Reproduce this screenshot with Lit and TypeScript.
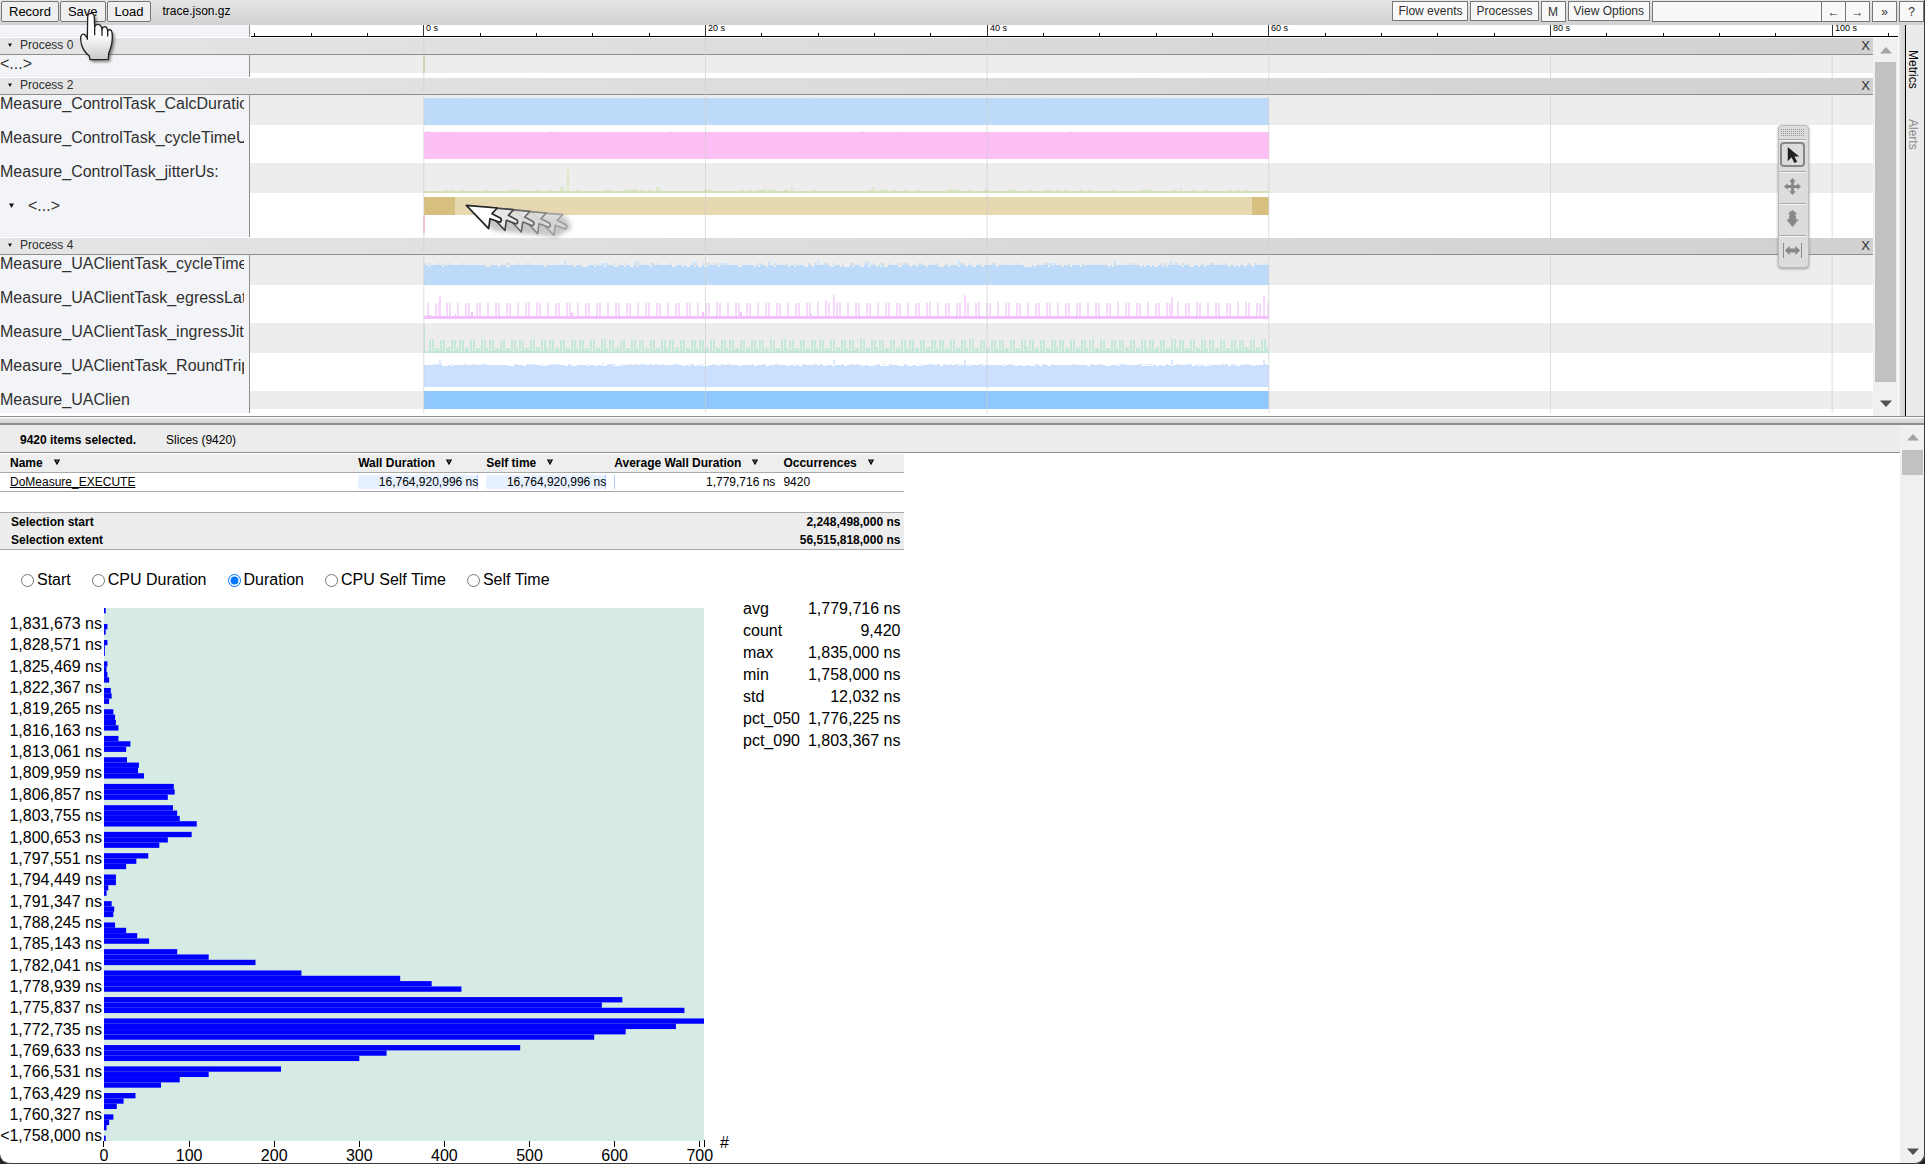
import { LitElement, html, svg, css, SVGTemplateResult } from "lit";
import { customElement, property, state } from "lit/decorators.js";
import { classMap } from "lit/directives/class-map.js";

/* ---------- shared timeline scale ---------- */
const LABEL_WIDTH = 250;
const ORIGIN = 424 - LABEL_WIDTH;
const PX_PER_TICK = 56.33;
const DATA_WIDTH = 845;

type Lane = {
  name: string;
  height: number;
  band: number;
  shaded: boolean;
  expandable?: boolean;
  draw: () => SVGTemplateResult;
};
type Process = { name: string; lanes: Lane[] };

const noise = (n: number) => {
  const v = Math.sin(n * 127.1 + 11.7) * 43758.5453;
  return v - Math.floor(v);
};

const block = (x: number, y: number, w: number, h: number, fill: string) =>
  svg`<rect x=${x} y=${y} width=${w} height=${h} fill=${fill}></rect>`;

const bars = (list: [number, number, number][], base: number, fill: string) =>
  svg`<path fill=${fill} d=${list
    .map(([x, w, top]) => `M${x} ${top}h${w}V${base}h${-w}z`)
    .join("")}></path>`;

/* Solid area whose top edge wobbles between a few levels. */
const ragged = (base: number, levels: number[], fill: string, step = 2) => {
  const list: [number, number, number][] = [];
  for (let x = 0; x < DATA_WIDTH; x += step) {
    const level = levels[Math.floor(noise(x + base) * levels.length)];
    list.push([ORIGIN + x, Math.min(step, DATA_WIDTH - x), level]);
  }
  return bars(list, base, fill);
};

const peaks = (list: [number, number][], base: number, fill: string) =>
  bars(list.map(([x, top]) => [ORIGIN + x, 2, top]), base, fill);

/* Spikes repeating every 30 pixels. */
const pulses = (start: number, offsets: number[], top: number) => {
  const list: [number, number, number][] = [];
  for (let x = start; x < DATA_WIDTH; x += 30) {
    offsets.forEach((o) => {
      const px = x + o;
      if (px > 2 && px < DATA_WIDTH - 1) list.push([ORIGIN + px, 2, noise(px) > 0.85 ? top - 1 : top]);
    });
  }
  return list;
};

const PROCESSES: Process[] = [
  {
    name: "Process 0",
    lanes: [
      {
        name: "<...>", height: 22, band: 18, shaded: true,
        draw: () => block(ORIGIN - 1, 0, 2, 18, "#c4dca4"),
      },
    ],
  },
  {
    name: "Process 2",
    lanes: [
      {
        name: "Measure_ControlTask_CalcDuratio", height: 34, band: 30, shaded: true,
        draw: () => svg`
          ${block(ORIGIN, 3, DATA_WIDTH, 27, "#bddbf8")}
          ${bars([[214, 2, 2], [391, 2, 2], [560, 2, 2], [790, 2, 2], [905, 2, 2]], 3, "#d3e5f5")}`,
      },
      {
        name: "Measure_ControlTask_cycleTimeUs", height: 34, band: 30, shaded: false,
        draw: () => svg`
          ${block(ORIGIN, 3, DATA_WIDTH, 27, "#fdc0f5")}
          ${bars([[176, 5, 2], [197, 2, 2], [300, 3, 2], [420, 2, 2], [611, 3, 2], [650, 2, 2], [820, 2, 2]], 3, "#fde0f8")}`,
      },
      {
        name: "Measure_ControlTask_jitterUs:", height: 34, band: 30, shaded: true,
        draw: () => svg`
          ${ragged(30, [28, 28, 28, 28, 28, 27, 28, 27], "#d3e2ba", 4)}
          ${bars([[200, 2, 26], [310, 4, 24], [317, 2, 7], [386, 2, 26], [406, 3, 24], [409, 2, 26], [514, 2, 25], [541, 2, 24], [622, 2, 24], [700, 2, 26], [830, 2, 26], [930, 2, 25]], 28, "#dde8cb")}`,
      },
      {
        name: "<...>", height: 40, band: 36, shaded: false, expandable: true,
        draw: () => svg`
          ${block(ORIGIN, 0, 31, 18, "#d7c07f")}
          ${block(ORIGIN + 31, 0, 797, 18, "#e6d8b1")}
          ${block(ORIGIN + 828, 0, 17, 18, "#d7c07f")}
          ${block(ORIGIN - 1, 18, 2, 18, "#fbb8d4")}`,
      },
    ],
  },
  {
    name: "Process 4",
    lanes: [
      {
        name: "Measure_UAClientTask_cycleTimeUs", height: 34, band: 30, shaded: true,
        draw: () => svg`
          ${ragged(10, [10, 10, 10, 8], "#cfe3f6", 2)}
          ${peaks([[140, 6], [213, 6], [271, 6], [344, 6], [393, 6], [442, 6], [534, 6], [690, 6], [746, 6]], 10, "#cfe3f6")}
          ${ragged(30, [10, 10, 10, 12], "#bddbf8", 2)}`,
      },
      {
        name: "Measure_UAClientTask_egressLate", height: 34, band: 30, shaded: false,
        draw: () => svg`
          ${bars([...pulses(-27, [0, 8, 11, 19, 22], 14), [189, 2, 7], [575, 2, 11], [583, 2, 6], [714, 2, 6], [921, 2, 8], [1013, 2, 7]], 27, "#f6d9fc")}
          ${bars([[178, 3, 26], [205, 1, 25], [221, 2, 23], [321, 2, 24], [452, 2, 23], [490, 2, 23], [561, 1, 25]], 27, "#f2c0fb")}
          ${block(ORIGIN, 27, DATA_WIDTH, 3, "#f2c0fb")}`,
      },
      {
        name: "Measure_UAClientTask_ingressJitt", height: 34, band: 30, shaded: true,
        draw: () => svg`
          ${block(ORIGIN, 2, 1, 28, "#bfe6d3")}
          ${bars(pulses(-3, [0, 3, 8, 11, 19, 22], 17), 30, "#c6e8d9")}
          ${bars(pulses(-3, [5, 14, 16, 25, 27], 25), 30, "#c6e8d9")}
          ${ragged(30, [28, 28, 29, 28], "#bfe6d3", 2)}`,
      },
      {
        name: "Measure_UAClientTask_RoundTrip", height: 34, band: 30, shaded: false,
        draw: () => svg`
          ${ragged(8, [7, 8, 8], "#dbe9ff", 3)}
          ${peaks([[15, 3], [178, 6], [409, 3], [540, 3], [747, 3], [839, 3]], 8, "#dbe9ff")}
          ${ragged(30, [8, 8, 8, 9], "#cbdfff", 3)}`,
      },
      {
        name: "Measure_UAClien", height: 22, band: 18, shaded: true,
        draw: () => block(ORIGIN, 0, DATA_WIDTH, 18, "#8ec8ff"),
      },
    ],
  },
];

/* ---------- one collapsible process group ---------- */
@customElement("process-group")
class ProcessGroup extends LitElement {
  @property({ attribute: false }) process!: Process;
  @state() private open = true;

  static styles = css`
    :host { display: block; padding-top: 1px; }
    .head {
      display: flex; align-items: flex-start; justify-content: space-between;
      box-sizing: border-box; height: 17px; border-bottom: 1px solid #8e8e8e;
      background: linear-gradient(to right, #e5e5e5, #d1d1d1);
    }
    button { border: 0; background: none; padding: 0; font: inherit; color: #303030; cursor: pointer; }
    .toggle { display: flex; align-items: center; gap: 8px; padding-left: 8px; line-height: 14px; }
    .close { padding-right: 3px; font-size: 13px; line-height: 15px; }
    .lane { display: flex; }
    .name {
      flex: none; box-sizing: border-box; width: 250px; padding-right: 5px;
      border-right: 1px solid #8e8e8e; background: #f3f4f7; color: #303030;
      font-size: 16px; line-height: 18px;
    }
    .text { overflow: hidden; white-space: nowrap; }
    .expandable { display: flex; gap: 14px; padding-left: 9px; align-items: flex-start; }
    .expandable svg { margin-top: 6px; }
    .plot { flex: 1; min-width: 0; background: #fff; }
    .plot svg { display: block; width: 100%; }
    .shade { fill: #ededed; }
    .blank { fill: none; }
  `;

  private arrow(size: number) {
    return html`<svg width=${size} height=${size} viewBox="0 0 5 5" aria-hidden="true">
      <path d="M0 .5h5L2.5 5z" fill="#111"></path>
    </svg>`;
  }

  render() {
    return html`
      <div class="head">
        <button class="toggle" @click=${() => (this.open = !this.open)}>${this.arrow(4)}${this.process.name}</button>
        <button class="close">X</button>
      </div>
      ${this.open
        ? this.process.lanes.map(
            (lane) => html`<div class="lane">
              <div class=${classMap({ name: true, expandable: !!lane.expandable })}>
                ${lane.expandable ? this.arrow(5) : ""}
                <div class="text">${lane.name}</div>
              </div>
              <div class="plot">
                <svg height=${lane.height} shape-rendering="crispEdges">
                  <rect class=${lane.shaded ? "shade" : "blank"} width="100%" height=${lane.band}></rect>
                  ${lane.draw()}
                </svg>
              </div>
            </div>`
          )
        : ""}
    `;
  }
}

/* ---------- duration histogram ---------- */
const BINS: Record<number, number> = {
  0: 2, 3: 4, 4: 2, 6: 4, 7: 1, 8: 1, 10: 4, 11: 3, 12: 4, 13: 6, 15: 8, 16: 9, 17: 6,
  19: 11, 20: 13, 21: 14, 22: 17, 24: 17, 25: 31, 26: 26, 28: 27, 29: 41, 30: 40, 31: 47,
  33: 82, 34: 83, 35: 75, 37: 81, 38: 86, 39: 89, 40: 109, 42: 103, 43: 75, 44: 65,
  46: 52, 47: 38, 48: 26, 50: 14, 51: 14, 52: 5, 53: 3, 55: 9, 56: 12, 57: 11,
  59: 13, 60: 26, 61: 39, 62: 53, 64: 86, 65: 123, 66: 178, 68: 232, 69: 348, 70: 385, 71: 420,
  73: 609, 74: 585, 75: 682, 77: 705, 78: 672, 79: 613, 80: 576, 82: 489, 83: 332, 84: 300,
  86: 208, 87: 123, 88: 89, 89: 67, 91: 37, 92: 23, 93: 15, 95: 11, 96: 6, 97: 3, 99: 2,
};
const Y_LABELS = [
  "1,831,673", "1,828,571", "1,825,469", "1,822,367", "1,819,265", "1,816,163", "1,813,061",
  "1,809,959", "1,806,857", "1,803,755", "1,800,653", "1,797,551", "1,794,449", "1,791,347",
  "1,788,245", "1,785,143", "1,782,041", "1,778,939", "1,775,837", "1,772,735", "1,769,633",
  "1,766,531", "1,763,429", "1,760,327", "<1,758,000",
];

@customElement("duration-histogram")
class DurationHistogram extends LitElement {
  static styles = css`
    :host { display: block; }
    svg { display: block; font: 16px "Liberation Sans", Arial, sans-serif; }
    .plot { fill: #d5ebe3; }
    .bar { fill: #0000ff; }
    .axis { stroke: #000; stroke-width: 1; shape-rendering: crispEdges; }
    .end { text-anchor: end; }
    .mid { text-anchor: middle; }
  `;
  render() {
    const x = (v: number) => 104 + (v * 600) / 705;
    return html`<svg width="743" height="555" role="img" aria-label="Duration histogram">
      <rect class="plot" x="104" y="0" width="600" height="533"></rect>
      ${Object.entries(BINS).map(
        ([bin, count]) => svg`<rect class="bar" x="104" y=${Number(bin) * 5.33} width=${x(count) - 104} height="5.33"></rect>`
      )}
      ${Y_LABELS.map((label, i) => svg`<text class="end" x="102" y=${Math.round(21 + i * 21.35)}>${label} ns</text>`)}
      ${[0, 100, 200, 300, 400, 500, 600, 700].map(
        (v) => svg`
          <path class="axis" d="M${Math.floor(x(v)) - (v ? 0 : 1) + 0.5} 533v6"></path>
          <text class="mid" x=${x(v)} y="553">${v}</text>`
      )}
      <path class="axis" d="M704.5 532v7"></path>
      <text x="720" y="540">#</text>
    </svg>`;
  }
}

/* ---------- page ---------- */
const STATS = [
  ["avg", "1,779,716 ns"], ["count", "9,420"], ["max", "1,835,000 ns"], ["min", "1,758,000 ns"],
  ["std", "12,032 ns"], ["pct_050", "1,776,225 ns"], ["pct_090", "1,803,367 ns"],
];
const METRICS = ["Start", "CPU Duration", "Duration", "CPU Self Time", "Self Time"];
const COLUMNS = ["Name", "Wall Duration", "Self time", "Average Wall Duration", "Occurrences"];

const TOOLS: { label: string; icon: SVGTemplateResult }[] = [
  { label: "Select", icon: svg`<path fill="#222" d="M5 2v15l4-4 3 6 3-1.500-3-5.500h5z"></path>` },
  { label: "Pan", icon: svg`<path fill="#888" d="M10 1l3.500 4h-2v3.500H15v-2l4 3.500-4 3.500v-2h-3.500V15h2L10 19l-3.500-4h2v-3.500H5v2L1 10l4-3.500v2h3.500V5h-2z"></path>` },
  { label: "Zoom", icon: svg`<path fill="#888" d="M10 1l5 4h-2l1 6h2.500L10 19l-6.500-8H6l1-6H5z"></path>` },
  {
    label: "Timing",
    icon: svg`<path fill="#888" d="M0 2h1v16H0zM19 2h1v16h-1zM2 10l5-5v3h6V5l5 5-5 5v-3H7v3z"></path>`,
  },
];

@customElement("app-root")
class AppRoot extends LitElement {
  @state() private tool = 0;
  @state() private metric = 2;

  static styles = css`
    :host {
      display: flex; flex-direction: column; position: relative; overflow: hidden;
      box-sizing: border-box; height: 100vh; background: #fff; color: #000;
      font: 12px "Liberation Sans", Arial, sans-serif;
    }
    .toolbar {
      flex: none; display: flex; justify-content: space-between; align-items: flex-start;
      height: 25px; box-sizing: border-box; padding: 1px 1px 0;
      background: linear-gradient(#e5e5e5, #d1d1d1);
    }
    .group { display: flex; align-items: flex-start; }
    .files { gap: 1px; }
    .files button {
      height: 21px; padding: 0 7px; border: 1px solid #767676; border-radius: 2px;
      background: #efefef; font: 13px "Liberation Sans", Arial, sans-serif; color: #000;
    }
    .title { padding-left: 10px; line-height: 21px; }
    .options { gap: 2px; }
    .options button, .find {
      box-sizing: border-box; height: 20px; padding: 0 5px; border: 1px solid #777;
      background: #f8f8f8; font: inherit; color: #303030;
    }
    .options .square { width: 25px; height: 21px; padding: 0; }
    .options .find { width: 170px; height: 21px; outline: 0; }
    .joined { display: flex; }
    .joined .square { margin-left: -1px; }

    .timeline { flex: none; display: flex; border-bottom: 1px solid #8e8e8e; }
    .main { flex: 1; min-width: 0; }
    .ruler { display: flex; height: 12px; }
    .corner { flex: none; box-sizing: border-box; width: 250px; border-right: 1px solid #8e8e8e; background: #f3f4f7; }
    .ticks { flex: 1; min-width: 0; }
    .ticks svg { display: block; width: 100%; height: 12px; font-size: 9px; }
    .baseline, .tick { fill: #000; }
    .major { fill: #333; }
    .body { display: flex; }
    .tracks { position: relative; flex: 1; min-width: 0; padding-bottom: 3px; }
    .grid { position: absolute; inset: 0 0 3px 250px; width: calc(100% - 250px); height: calc(100% - 3px); pointer-events: none; }
    .grid line { stroke: #d0d0d0; stroke-opacity: 0.7; }
    .scroll { flex: none; display: flex; flex-direction: column; align-items: center; width: 25px; box-sizing: border-box; background: #f0f0f0; }
    .scroll svg { flex: none; }
    .thumb { background: #c1c1c1; width: 21px; }
    .upper { padding: 9px 0; margin-top: 1px; }
    .upper .thumb { flex: 1; margin: 8px 0 18px; }
    .handle { flex: none; width: 6px; margin-left: 1px; border-right: 1px solid #000; background: linear-gradient(to right, #e5e5e5, #d1d1d1); }
    .sidebar { flex: none; width: 19px; display: flex; flex-direction: column; gap: 30px; padding-top: 25px; box-sizing: border-box; background: #ebebeb; }
    .sidebar button {
      writing-mode: vertical-rl; align-self: flex-start; padding: 0; border: 0; background: none;
      font: inherit; line-height: 14px; color: #8c8c8c;
    }
    .sidebar .current { color: #000; }

    .splitter { flex: none; height: 5px; margin-top: 1px; background: linear-gradient(#e5e5e5, #d1d1d1); border-bottom: 2px solid #8e8e8e; }
    .analysis { flex: 1; min-height: 0; display: flex; overflow: hidden; }
    .content { flex: 1; min-width: 0; }
    .summary { display: flex; gap: 30px; height: 28px; padding-left: 20px; line-height: 31px; box-sizing: border-box; background: #ececec; border-bottom: 1px solid #8e8e8e; }
    .details { width: fit-content; padding-top: 1px; }
    table { border-collapse: collapse; border-spacing: 0; }
    th, td { padding: 0; text-align: left; font-weight: normal; }
    .slices, .selection { width: 100%; line-height: 14px; }
    .slices th, .slices td { padding: 2px 4px; border-bottom: 1px solid #aaa; height: 14px; white-space: nowrap; box-sizing: content-box; }
    .slices th { background: #eee; font-weight: bold; }
    .slices th:first-child, .slices td:first-child { padding-left: 10px; }
    .slices svg { margin-left: 11px; vertical-align: 2px; }
    .slices a { color: #000; text-decoration-skip-ink: none; }
    .name { width: 354px; }
    .total { width: 128px; }
    .average { width: 169px; }
    .count { width: 125px; }
    .meter { text-align: right; height: 14px; }
    .full { background: #e6f0ff; box-shadow: inset -1px 0 #a8ccff; }
    .thin { box-shadow: inset 1px 0 #a8ccff; }
    .selection { margin-top: 20px; line-height: 18px; background: #ededed; border: solid #aaa; border-width: 1px 0; }
    .selection th { padding-left: 11px; font-weight: bold; }
    .selection td { padding-right: 4px; text-align: right; font-weight: bold; }
    .metrics { display: flex; align-items: center; gap: 16px; height: 48px; box-sizing: border-box; padding: 12px 0 0 16px; font-size: 16px; }
    .metrics label { display: flex; align-items: center; line-height: 18px; }
    .metrics input { width: 13px; height: 13px; margin: 0 3px 0 5px; accent-color: #0075ff; }
    .result { display: flex; align-items: flex-start; }
    .chart { padding-top: 10px; }
    .stats { margin-right: 4px; font-size: 16px; line-height: 22px; }
    .stats td { padding-left: 8px; text-align: right; white-space: nowrap; }
    .lower { padding: 9px 0; }
    .lower .thumb { height: 25px; margin: 9px 0 auto; }

    .tools {
      position: absolute; top: 125px; right: 116px; width: 31px; box-sizing: border-box;
      border: 1px solid #bbb; border-radius: 4px; background: #dcdcdc;
      box-shadow: 0 1px 3px rgba(0, 0, 0, 0.35);
    }
    .grip { height: 13px; padding: 3px 3px 0 2px; box-sizing: border-box; }
    .grip svg { display: block; }
    .cell { height: 32px; margin-right: 2px; box-sizing: border-box; padding: 1px 0 0 1px; border-top: 1px solid #aaa; box-shadow: inset 0 1px #f6f6f6; }
    .cell button {
      display: flex; align-items: center; justify-content: center; width: 25px; height: 25px; margin-top: 1px;
      box-sizing: border-box; padding: 0; border: 2px solid transparent; border-radius: 4px; background: none;
    }
    .cell .picked { border-color: #888; }
    .cell svg { flex: none; }
    .hand { position: absolute; left: 76px; top: 10px; pointer-events: none; }
    .pointer { position: absolute; left: 460px; top: 200px; pointer-events: none; }
    .frame {
      position: absolute; inset: 0; pointer-events: none; border-radius: 0 0 10px 10px;
      border: solid #3a3a3a; border-width: 0 1px 1px 0; box-shadow: 0 0 0 12px #222;
    }
  `;

  private scrollArrow(up: boolean) {
    return html`<svg width="12" height="7" viewBox="0 0 12 7" aria-hidden="true">
      <path d=${up ? "M0 6.500L6 0l6 6.500z" : "M0 .5L6 7l6-6.500z"} fill=${up ? "#a3a3a3" : "#505050"}></path>
    </svg>`;
  }

  private ruler() {
    const ticks = Array.from({ length: 30 }, (_, i) => i - 3);
    return html`<svg>
      ${ticks.map((i) => {
        const x = Math.floor(ORIGIN - 0.1 + i * PX_PER_TICK);
        const major = i % 5 === 0;
        return major
          ? svg`<rect class="major" x=${x} y="0" width="1" height="12"></rect><text x=${x + 3} y="6">${i * 4} s</text>`
          : svg`<rect class="tick" x=${x} y="8" width="1" height="4"></rect>`;
      })}
      <rect class="baseline" x="1" y="11" width="100%" height="1"></rect>
    </svg>`;
  }

  private arrowCursor(i: number) {
    return svg`<path transform="translate(${i * 49} ${i * 5})"
      d="M199 76L292 84L276 101L302 115Q307 122 300 127L270 116L266 146Z"
      fill=${["#fff", "#ececec", "#e4e4e4", "#dfdfdf", "#dadada"][i]} fill-opacity=${1 - i * 0.08}
      stroke=${["#222", "#444", "#6a6a6a", "#888", "#a0a0a0"][i]}
      stroke-width="5" stroke-linejoin="round"></path>`;
  }

  render() {
    const sort = html`<svg width="6" height="6" viewBox="0 0 6 6" aria-hidden="true">
      <path d="M.8 1h4.400L3 5z" fill="#777" stroke="#000" stroke-width="1.200"></path>
    </svg>`;
    return html`
      <header class="toolbar">
        <div class="group files">
          <button>Record</button><button>Save</button><button>Load</button>
          <span class="title">trace.json.gz</span>
        </div>
        <div class="group options">
          <button>Flow events</button><button>Processes</button><button class="square">M</button>
          <button>View Options</button>
          <div class="joined">
            <input class="find" type="text" aria-label="Find" />
            <button class="square">←</button><button class="square">→</button>
          </div>
          <button class="square">»</button><button class="square">?</button>
        </div>
      </header>

      <section class="timeline">
        <div class="main">
          <div class="ruler">
            <div class="corner"></div>
            <div class="ticks">${this.ruler()}</div>
          </div>
          <div class="body">
            <div class="tracks">
              ${PROCESSES.map((p) => html`<process-group .process=${p}></process-group>`)}
              <svg class="grid">
                ${[0, 1, 2, 3, 4, 5].map((i) => {
                  const x = ORIGIN - 0.2 + i * 281.67;
                  return svg`<line x1=${x} x2=${x} y1="0" y2="100%"></line>`;
                })}
              </svg>
            </div>
            <div class="scroll upper">${this.scrollArrow(true)}<div class="thumb"></div>${this.scrollArrow(false)}</div>
          </div>
        </div>
        <div class="handle"></div>
        <nav class="sidebar"><button class="current">Metrics</button><button>Alerts</button></nav>
      </section>
      <div class="splitter"></div>

      <section class="analysis">
        <div class="content">
          <div class="summary"><b>9420 items selected.</b><span>Slices (9420)</span></div>
          <div class="details">
            <table class="slices">
              <colgroup><col class="name" /><col class="total" /><col class="total" /><col class="average" /><col class="count" /></colgroup>
              <thead><tr>${COLUMNS.map((c) => html`<th scope="col">${c}${sort}</th>`)}</tr></thead>
              <tbody>
                <tr>
                  <td><a href="#slice">DoMeasure_EXECUTE</a></td>
                  <td><div class="meter full">16,764,920,996 ns</div></td>
                  <td><div class="meter full">16,764,920,996 ns</div></td>
                  <td><div class="meter thin">1,779,716 ns</div></td>
                  <td>9420</td>
                </tr>
              </tbody>
            </table>
            <table class="selection">
              <tbody>
                <tr><th scope="row">Selection start</th><td>2,248,498,000 ns</td></tr>
                <tr><th scope="row">Selection extent</th><td>56,515,818,000 ns</td></tr>
              </tbody>
            </table>
            <div class="metrics">
              ${METRICS.map(
                (m, i) => html`<label><input type="radio" name="metric" .checked=${this.metric === i}
                  @change=${() => (this.metric = i)} />${m}</label>`
              )}
            </div>
            <div class="result">
              <div class="chart"><duration-histogram></duration-histogram></div>
              <table class="stats">
                <tbody>${STATS.map(([k, v]) => html`<tr><th scope="row">${k}</th><td>${v}</td></tr>`)}</tbody>
              </table>
            </div>
          </div>
        </div>
        <div class="scroll lower">${this.scrollArrow(true)}<div class="thumb"></div>${this.scrollArrow(false)}</div>
      </section>

      <div class="tools">
        <div class="grip">
          <svg width="24" height="7" shape-rendering="crispEdges" aria-hidden="true">
            ${[0, 2, 4, 6].map((y) => svg`<path d="M0 ${y + 0.5}h24" stroke="#999" stroke-dasharray="1 1"></path>`)}
          </svg>
        </div>
        ${TOOLS.map(
          (t, i) => html`<div class="cell">
            <button class=${classMap({ picked: this.tool === i })} aria-label=${t.label} @click=${() => (this.tool = i)}>
              <svg width="19" height="19" viewBox="0 0 20 20">${t.icon}</svg>
            </button>
          </div>`
        )}
      </div>

      <svg class="hand" width="44" height="56" viewBox="228 30 132 168" aria-hidden="true">
        <defs>
          <linearGradient id="skin" x1="0" y1="0" x2="0" y2="1"><stop offset=".45" stop-color="#fff"></stop><stop offset="1" stop-color="#c9c9c9"></stop></linearGradient>
          <filter id="soft" x="-20%" y="-20%" width="150%" height="150%"><feGaussianBlur stdDeviation="5"></feGaussianBlur></filter>
        </defs>
        <path transform="translate(6 7)" filter="url(#soft)" fill="rgba(0,0,0,.5)"
          d="M263 52Q263 40 273 40Q283 40 283 52L284 80Q288 72 296 73Q304 75 306 88Q309 78 316 80Q322 82 323 93Q329 86 334 92Q338 98 337 112Q337 135 326 160L325 178L270 179L268 168Q252 155 246 138Q240 120 243 108Q248 98 256 106L262 114Z"></path>
        <path fill="url(#skin)" stroke="#222" stroke-width="4" stroke-linejoin="round"
          d="M263 52Q263 40 273 40Q283 40 283 52L284 80Q288 72 296 73Q304 75 306 88Q309 78 316 80Q322 82 323 93Q329 86 334 92Q338 98 337 112Q337 135 326 160L325 178L270 179L268 168Q252 155 246 138Q240 120 243 108Q248 98 256 106L262 114Z"></path>
        <path fill="none" stroke="#222" stroke-width="4" stroke-linecap="round" d="M284 80V104M306 88V106M323 93V108M262 104V118"></path>
      </svg>

      <svg class="pointer" width="120" height="44" viewBox="180 60 360 132" aria-hidden="true">
        <defs><filter id="blur" x="-20%" y="-40%" width="140%" height="200%"><feGaussianBlur stdDeviation="7"></feGaussianBlur></filter></defs>
        <path filter="url(#blur)" fill="rgba(0,0,0,.22)" d="M215 88L500 110L515 145L470 172L280 152Z"></path>
        ${[4, 3, 2, 1, 0].map((i) => this.arrowCursor(i))}
      </svg>
      <div class="frame"></div>
    `;
  }
}
